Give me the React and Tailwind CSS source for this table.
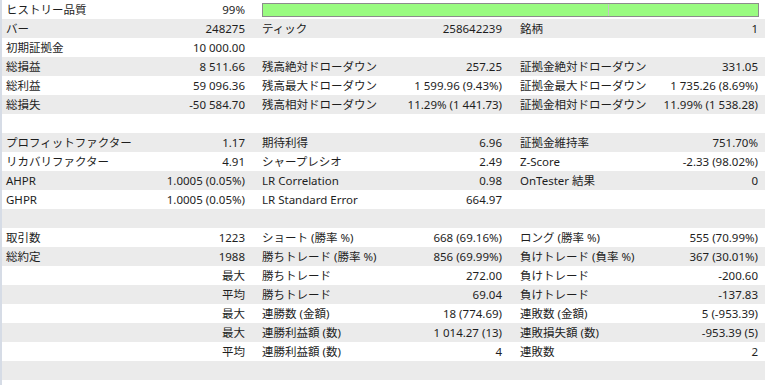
const rows = [
  [['ヒストリー品質', '99%'], 'bar'],
  [['バー', '248275'], ['ティック', '258642239'], ['銘柄', '1']],
  [['初期証拠金', '10 000.00'], null, null],
  [['総損益', '8 511.66'], ['残高絶対ドローダウン', '257.25'], ['証拠金絶対ドローダウン', '331.05']],
  [['総利益', '59 096.36'], ['残高最大ドローダウン', '1 599.96 (9.43%)'], ['証拠金最大ドローダウン', '1 735.26 (8.69%)']],
  [['総損失', '-50 584.70'], ['残高相対ドローダウン', '11.29% (1 441.73)'], ['証拠金相対ドローダウン', '11.99% (1 538.28)']],
  [null, null, null],
  [['プロフィットファクター', '1.17'], ['期待利得', '6.96'], ['証拠金維持率', '751.70%']],
  [['リカバリファクター', '4.91'], ['シャープレシオ', '2.49'], ['Z-Score', '-2.33 (98.02%)']],
  [['AHPR', '1.0005 (0.05%)'], ['LR Correlation', '0.98'], ['OnTester 結果', '0']],
  [['GHPR', '1.0005 (0.05%)'], ['LR Standard Error', '664.97'], null],
  [null, null, null],
  [['取引数', '1223'], ['ショート (勝率 %)', '668 (69.16%)'], ['ロング (勝率 %)', '555 (70.99%)']],
  [['総約定', '1988'], ['勝ちトレード (勝率 %)', '856 (69.99%)'], ['負けトレード (負率 %)', '367 (30.01%)']],
  [['', '最大'], ['勝ちトレード', '272.00'], ['負けトレード', '-200.60']],
  [['', '平均'], ['勝ちトレード', '69.04'], ['負けトレード', '-137.83']],
  [['', '最大'], ['連勝数 (金額)', '18 (774.69)'], ['連敗数 (金額)', '5 (-953.39)']],
  [['', '最大'], ['連勝利益額 (数)', '1 014.27 (13)'], ['連敗損失額 (数)', '-953.39 (5)']],
  [['', '平均'], ['連勝利益額 (数)', '4'], ['連敗数', '2']],
  [null, null, null],
  [null, null, null],
]

const pads = ['pl-1 pr-[13px]', 'pl-1 pr-[14px]', 'pl-1 pr-[7px]']

function Cell({ cell, pad }) {
  return (
    <div className={`flex items-center justify-between whitespace-nowrap ${pad}`}>
      <span>{cell ? cell[0] : ''}</span>
      <span>{cell ? cell[1] : ''}</span>
    </div>
  )
}

export default function App() {
  return (
    <div
      className="w-[765px] h-[385px] overflow-hidden bg-white border-l-2 border-[#d6dce6] text-[11.5px] text-[#1e1e1e]"
      style={{ fontFamily: '"Noto Sans", "Noto Sans CJK JP", sans-serif' }}
    >
      {rows.map((row, i) => (
        <div
          key={i}
          className={`grid grid-cols-[256px_258px_1fr] h-[19px] leading-[19px] ${i % 2 ? 'bg-[#ebebeb]' : 'bg-white'}`}
        >
          <Cell cell={row[0]} pad={pads[0]} />
          {row[1] === 'bar' ? (
            <div className="col-span-2 flex items-center pl-1 pr-[6px]">
              <div className="flex h-[14px] w-full border border-[#8c8c8c] bg-[#99fb80]">
                <div className="w-[346px] border-r border-[#c4c4c4]" />
                <div className="flex-1" />
              </div>
            </div>
          ) : (
            <>
              <Cell cell={row[1]} pad={pads[1]} />
              <Cell cell={row[2]} pad={pads[2]} />
            </>
          )}
        </div>
      ))}
    </div>
  )
}
